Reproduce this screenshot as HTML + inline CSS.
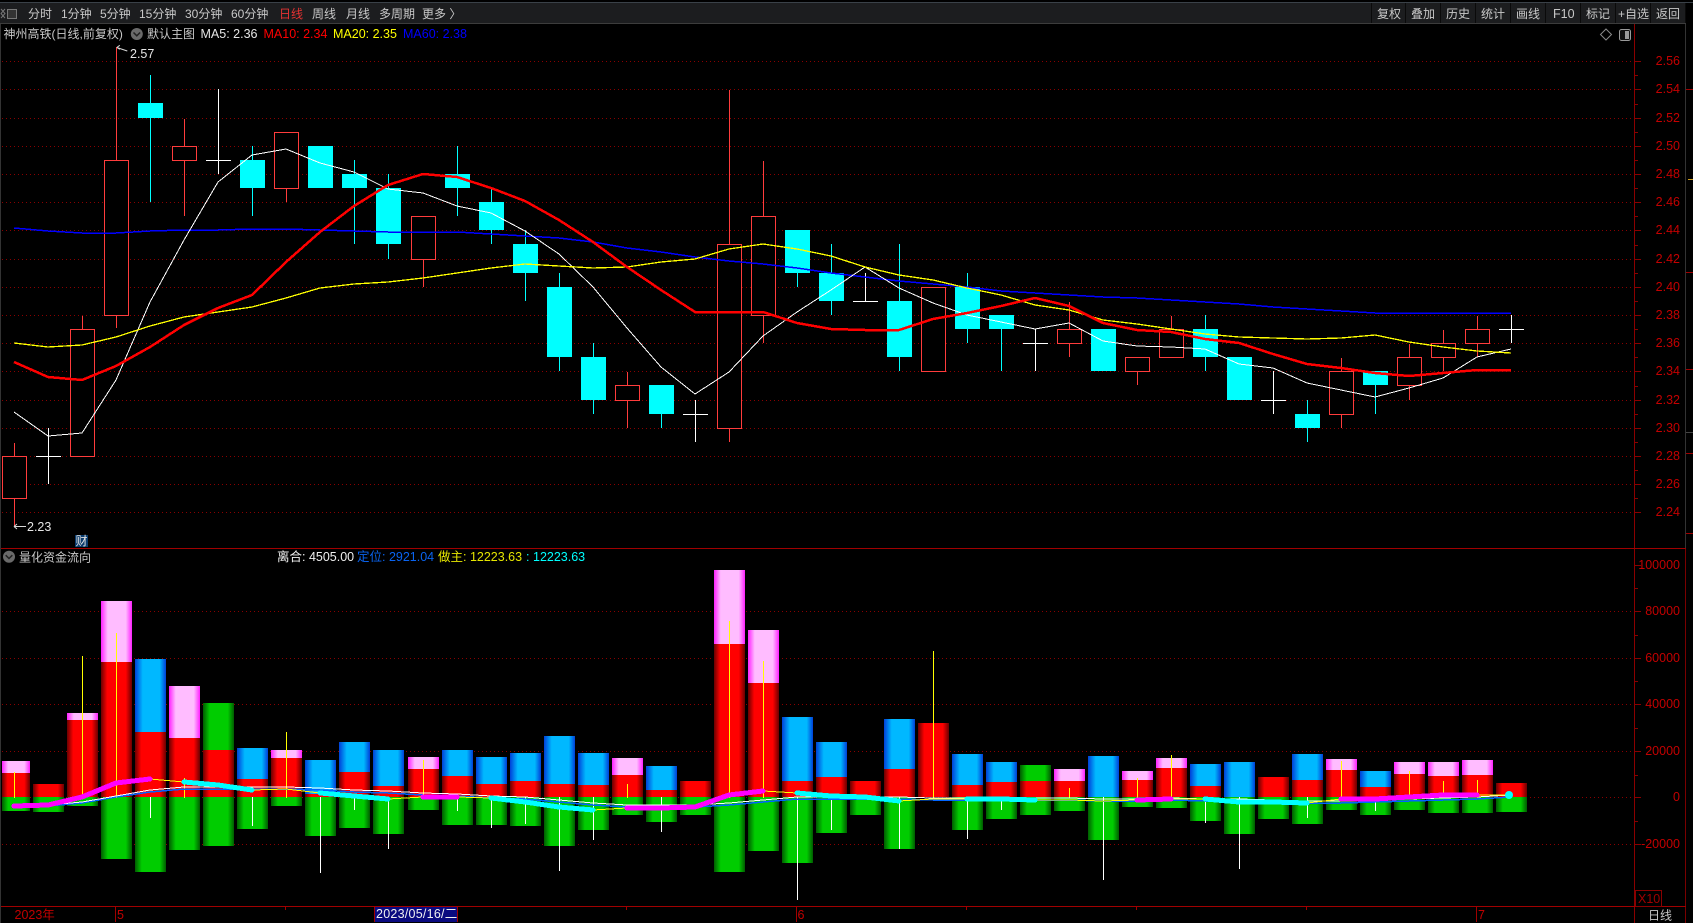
<!DOCTYPE html>
<html lang="zh">
<head>
<meta charset="utf-8">
<title>神州高铁</title>
<style>
html,body{margin:0;padding:0;background:#000;width:1693px;height:923px;overflow:hidden}
svg{display:block}
text{font-family:"Liberation Sans","Noto Sans CJK SC",sans-serif;font-size:12px;white-space:pre}
.t text{fill:#c8c8c8}
.ax text{fill:#c40000;font-size:12.5px;text-anchor:end}
.n{font-size:12.5px}
.c{shape-rendering:crispEdges}
.l{fill:none;shape-rendering:crispEdges}
</style>
</head>
<body>
<svg width="1693" height="923" viewBox="0 0 1693 923" xmlns="http://www.w3.org/2000/svg">
<defs>
<linearGradient id="r"><stop offset="0" stop-color="#6a0000"/><stop offset=".2" stop-color="#ff0000"/><stop offset=".8" stop-color="#ff0000"/><stop offset="1" stop-color="#6a0000"/></linearGradient>
<linearGradient id="p"><stop offset="0" stop-color="#ff20ff"/><stop offset=".22" stop-color="#ffbcff"/><stop offset=".8" stop-color="#ffbcff"/><stop offset="1" stop-color="#ff20ff"/></linearGradient>
<linearGradient id="b"><stop offset="0" stop-color="#0040d8"/><stop offset=".25" stop-color="#00b8ff"/><stop offset=".8" stop-color="#00b8ff"/><stop offset="1" stop-color="#0040d8"/></linearGradient>
<linearGradient id="g"><stop offset="0" stop-color="#005c00"/><stop offset=".22" stop-color="#00cc00"/><stop offset=".8" stop-color="#00cc00"/><stop offset="1" stop-color="#005c00"/></linearGradient>
</defs>
<rect width="1693" height="923" fill="#000"/>

<!-- toolbar -->
<g class="c">
<rect x="0" y="2" width="1693" height="1" fill="#3a4148"/>
<rect x="0" y="3" width="1686" height="20" fill="#1c1d1f"/>
<rect x="0" y="23" width="1686" height="1" fill="#3c3c3c"/>
<path d="M1371.5 3V23M1405.5 3V23M1440.5 3V23M1475.5 3V23M1510.5 3V23M1545.5 3V23M1580.5 3V23M1615.5 3V23M1650.5 3V23M1685.5 3V23" stroke="#0a0a0a" fill="none"/>
</g>
<path d="M1 9l4 4.500-4 4.500M5 9l-4 4.500 4 4.500" stroke="#777" fill="none"/>
<rect x="7.500" y="9.500" width="9" height="9" fill="#333" stroke="#777"/>
<g class="t">
<text x="28" y="18">分时</text>
<text x="61" y="18">1分钟</text>
<text x="100" y="18">5分钟</text>
<text x="139" y="18">15分钟</text>
<text x="185" y="18">30分钟</text>
<text x="231" y="18">60分钟</text>
<text x="279" y="18" style="fill:#e63232">日线</text>
<text x="312" y="18">周线</text>
<text x="346" y="18">月线</text>
<text x="379" y="18">多周期</text>
<text x="422" y="18">更多 〉</text>
<text x="1377" y="18">复权</text>
<text x="1411" y="18">叠加</text>
<text x="1446" y="18">历史</text>
<text x="1481" y="18">统计</text>
<text x="1516" y="18">画线</text>
<text x="1553" y="18" class="n">F10</text>
<text x="1586" y="18">标记</text>
<text x="1618" y="18">+自选</text>
<text x="1656" y="18">返回</text>
<text x="3.500" y="38">神州高铁(日线,前复权)</text>
<text x="147" y="38">默认主图</text>
<text x="19" y="561.500">量化资金流向</text>
<text x="1648" y="919.500">日线</text>
</g>
<circle cx="136.800" cy="34" r="6" fill="#6a6a6a"/>
<path d="M133.500 32.500l3.300 3.300 3.300-3.300" stroke="#222" stroke-width="1.500" fill="none"/>
<circle cx="9" cy="556.700" r="6" fill="#6a6a6a"/>
<path d="M5.700 555.200l3.300 3.300 3.300-3.300" stroke="#222" stroke-width="1.500" fill="none"/>
<text x="200.500" y="38" class="n" fill="#e6e6e6">MA5: 2.36</text>
<text x="263.500" y="38" class="n" fill="#ff0000">MA10: 2.34</text>
<text x="333" y="38" class="n" fill="#ffff00">MA20: 2.35</text>
<text x="403" y="38" class="n" fill="#0000ff">MA60: 2.38</text>
<path d="M1606 29l5.500 5.500-5.500 5.500-5.500-5.500z" stroke="#8a8a8a" fill="none"/>
<rect x="1619.500" y="29.500" width="11" height="11" rx="2" stroke="#9a9a9a" fill="#111"/>
<rect x="1625" y="31" width="4" height="8" fill="#9a9a9a"/>

<!-- frame -->
<g class="c" fill="none">
<path d="M.5 24V923" stroke="#333"/>
<path d="M1685.500 24V548" stroke="#333"/>
<path d="M1685.500 548V923" stroke="#7a0000"/>
<path d="M1686 89.500h7M1686 272.500h7M1686 369.500h7M1686 453.500h7M1686 533.500h7" stroke="#a00000"/>
<path d="M1688 179.500h5" stroke="#d0a020"/>
<path d="M1686 432.500h7" stroke="#444"/>
<path d="M1634.500 24V923" stroke="#8a0000"/>
<path d="M1 548.500H1686M1 906.500H1686" stroke="#a00000"/>
<path d="M1635 61.500h6M1635 89.500h6M1635 118.500h6M1635 146.500h6M1635 174.500h6M1635 202.500h6M1635 230.500h6M1635 259.500h6M1635 287.500h6M1635 315.500h6M1635 343.500h6M1635 371.500h6M1635 400.500h6M1635 428.500h6M1635 456.500h6M1635 484.500h6M1635 512.500h6M1635 75.500h3M1635 104.500h3M1635 132.500h3M1635 160.500h3M1635 188.500h3M1635 216.500h3M1635 245.500h3M1635 273.500h3M1635 301.500h3M1635 329.500h3M1635 357.500h3M1635 386.500h3M1635 414.500h3M1635 442.500h3M1635 470.500h3M1635 498.500h3" stroke="#8a0000"/>
<path d="M1635 565.500h6M1635 611.500h6M1635 658.500h6M1635 704.500h6M1635 751.500h6M1635 797.500h6M1635 844.500h6M1635 588.500h3M1635 635.500h3M1635 681.500h3M1635 728.500h3M1635 775.500h3M1635 821.500h3" stroke="#8a0000"/>
<!-- grids -->
<path d="M2 61.500H1634M2 89.500H1634M2 118.500H1634M2 146.500H1634M2 174.500H1634M2 202.500H1634M2 230.500H1634M2 259.500H1634M2 287.500H1634M2 315.500H1634M2 343.500H1634M2 371.500H1634M2 400.500H1634M2 428.500H1634M2 456.500H1634M2 484.500H1634M2 512.500H1634M2 611.500H1634M2 658.500H1634M2 704.500H1634M2 751.500H1634M2 797.500H1634M2 844.500H1634" stroke="#8a0000" stroke-dasharray="1 3"/>
</g>

<g class="ax">
<text x="1680" y="65">2.56</text><text x="1680" y="93">2.54</text><text x="1680" y="122">2.52</text><text x="1680" y="150">2.50</text><text x="1680" y="178">2.48</text><text x="1680" y="206">2.46</text><text x="1680" y="234">2.44</text><text x="1680" y="263">2.42</text><text x="1680" y="291">2.40</text><text x="1680" y="319">2.38</text><text x="1680" y="347">2.36</text><text x="1680" y="375">2.34</text><text x="1680" y="404">2.32</text><text x="1680" y="432">2.30</text><text x="1680" y="460">2.28</text><text x="1680" y="488">2.26</text><text x="1680" y="516">2.24</text>
<text x="1680" y="569">100000</text><text x="1680" y="615">80000</text><text x="1680" y="662">60000</text><text x="1680" y="708">40000</text><text x="1680" y="755">20000</text><text x="1680" y="801">0</text><text x="1680" y="848">-20000</text>
</g>

<!-- candles -->
<g class="c" fill="none">
<path stroke="#ff3c3c" d="M14.500 443V526M82.500 316V329M116.500 47V328M184.500 119V216M286.500 188V202M423.500 259V287M627.500 372V428M729.500 90V442M763.500 161V343M1069.500 302V357M1137.500 371V385M1171.500 316V329M1341.500 358V428M1409.500 344V400M1443.500 330V371M1477.500 316V357"/>
<g fill="#000" stroke="#ff3c3c">
<rect x="2.500" y="456.500" width="24" height="42"/>
<rect x="70.500" y="329.500" width="24" height="127"/>
<rect x="104.500" y="160.500" width="24" height="155"/>
<rect x="172.500" y="146.500" width="24" height="14"/>
<rect x="274.500" y="132.500" width="24" height="56"/>
<rect x="411.500" y="216.500" width="24" height="43"/>
<rect x="615.500" y="385.500" width="24" height="15"/>
<rect x="717.500" y="244.500" width="24" height="184"/>
<rect x="751.500" y="216.500" width="24" height="99"/>
<rect x="921.500" y="287.500" width="24" height="84"/>
<rect x="1057.500" y="329.500" width="24" height="14"/>
<rect x="1125.500" y="357.500" width="24" height="14"/>
<rect x="1159.500" y="329.500" width="24" height="28"/>
<rect x="1329.500" y="371.500" width="24" height="43"/>
<rect x="1397.500" y="357.500" width="24" height="28"/>
<rect x="1431.500" y="343.500" width="24" height="14"/>
<rect x="1465.500" y="329.500" width="24" height="14"/>
</g>
<path stroke="#00ffff" d="M150.500 75V202M252.500 146V216M354.500 160V244M388.500 174V259M457.500 146V216M491.500 188V244M525.500 230V301M559.500 273V371M593.500 343V414M661.500 385V428M797.500 230V287M831.500 244V315M899.500 244V371M967.500 273V343M1001.500 315V371M1205.500 315V371M1307.500 400V442M1375.500 371V414"/>
<path fill="#00ffff" d="M138 103h25v15h-25zM240 160h25v28h-25zM308 146h25v42h-25zM342 174h25v14h-25zM376 188h25v56h-25zM445 174h25v14h-25zM479 202h25v28h-25zM513 244h25v29h-25zM547 287h25v70h-25zM581 357h25v43h-25zM649 385h25v29h-25zM785 230h25v43h-25zM819 273h25v28h-25zM887 301h25v56h-25zM955 287h25v42h-25zM989 315h25v14h-25zM1091 329h25v42h-25zM1193 329h25v28h-25zM1227 357h25v43h-25zM1295 414h25v14h-25zM1363 371h25v14h-25z"/>
<path stroke="#fff" d="M36 456.500h25M48.500 428V484M206 160.500h25M218.500 89V174M683 414.500h25M695.500 400V442M853 301.500h25M865.500 273V301M1023 343.500h25M1035.500 329V371M1261 400.500h25M1273.500 371V414M1499 329.500h25M1511.500 315V343"/>
</g>

<!-- MA lines -->
<polyline class="l" stroke="#0000ff" stroke-width="1.500" points="14,228 48,231 82,233 116,233 150,231 184,230 218,230 252,229 286,229 320,230 354,231 388,232 423,232 457,232 491,234 525,236 559,238 593,242 627,248 661,252 695,257 729,261 763,264 797,268 831,273 865,277 899,281 933,284 967,287 1001,291 1035,293 1069,295 1103,297 1137,298 1171,300 1205,302 1239,304 1273,307 1307,309 1341,311 1375,313 1409,313 1443,313 1477,313 1511,313"/>
<polyline class="l" stroke="#fff" points="14,412 48,436 82,433 116,380 150,302 184,240 218,182 252,155 286,149 320,163 354,172 388,189 423,193 457,206 491,213 525,231 559,254 593,287 627,328 661,367 695,394 729,372 763,336 797,312 831,290 865,267 899,288 933,303 967,315 1001,322 1035,329 1069,323 1103,341 1137,346 1171,347 1205,349 1239,364 1273,368 1307,383 1341,390 1375,397 1409,388 1443,378 1477,357 1511,349"/>
<polyline class="l" stroke="#ffff00" stroke-width="1.300" points="14,343 48,347 82,345 116,337 150,326 184,317 218,312 252,307 286,298 320,288 354,284 388,282 423,278 457,273 491,268 525,264 559,266 593,268 627,267 661,262 695,259 729,249 763,244 797,249 831,256 865,267 899,275 933,280 967,288 1001,295 1035,305 1069,310 1103,320 1137,324 1171,329 1205,334 1239,337 1273,338 1307,339 1341,338 1375,335 1409,342 1443,347 1477,351 1511,353"/>
<polyline class="l" stroke="#ff0000" stroke-width="2.500" points="14,362 48,377 82,380 116,366 150,347 184,325 218,308 252,295 286,262 320,232 354,206 388,185 423,174 457,177 491,188 525,201 559,220 593,242 627,267 661,290 695,312 729,312 763,312 797,323 831,329 865,330 899,330 933,319 967,313 1001,306 1035,298 1069,306 1103,323 1137,330 1171,332 1205,339 1239,343 1273,354 1307,364 1341,368 1375,373 1409,376 1443,373 1477,370 1511,370"/>

<!-- price marks -->
<path d="M116.800 47.500l10.500 3.500M116.800 47.500l3-2.200M116.800 47.500l3 1.800" stroke="#d8d8d8" fill="none"/>
<text x="130" y="58" class="n" fill="#e6e6e6">2.57</text>
<path d="M14 526.500h12M14 526.500l3-2.500M14 526.500l3 2.500" stroke="#d8d8d8" fill="none"/>
<text x="27" y="531" class="n" fill="#e6e6e6">2.23</text>
<rect x="75" y="535" width="13" height="12" fill="#0a3c6e" class="c"/>
<text x="75.500" y="545" fill="#e0e0e0">财</text>

<!-- lower header -->
<text x="277" y="561" class="n" fill="#f0f0f0">离合: 4505.00</text>
<text x="357" y="561" class="n" fill="#0a64f0">定位: 2921.04</text>
<text x="438" y="561" class="n" fill="#e6e600">做主: 12223.63</text>
<text x="526" y="561" class="n" fill="#00ffff">:</text>
<text x="533" y="561" class="n" fill="#00ffff">12223.63</text>

<!-- bars -->
<g class="c">
<rect x="2" y="761" width="28" height="12" fill="url(#p)"/><rect x="2" y="773" width="28" height="24" fill="url(#r)"/><rect x="2" y="797" width="28" height="14" fill="url(#g)"/>
<rect x="33" y="784" width="31" height="13" fill="url(#r)"/><rect x="33" y="797" width="31" height="15" fill="url(#g)"/>
<rect x="67" y="713" width="31" height="7" fill="url(#p)"/><rect x="67" y="720" width="31" height="77" fill="url(#r)"/><rect x="67" y="797" width="31" height="9" fill="url(#g)"/>
<rect x="101" y="601" width="31" height="61" fill="url(#p)"/><rect x="101" y="662" width="31" height="135" fill="url(#r)"/><rect x="101" y="797" width="31" height="62" fill="url(#g)"/>
<rect x="135" y="659" width="31" height="73" fill="url(#b)"/><rect x="135" y="732" width="31" height="65" fill="url(#r)"/><rect x="135" y="797" width="31" height="75" fill="url(#g)"/>
<rect x="169" y="686" width="31" height="52" fill="url(#p)"/><rect x="169" y="738" width="31" height="59" fill="url(#r)"/><rect x="169" y="797" width="31" height="53" fill="url(#g)"/>
<rect x="203" y="703" width="31" height="47" fill="url(#g)"/><rect x="203" y="750" width="31" height="47" fill="url(#r)"/><rect x="203" y="797" width="31" height="49" fill="url(#g)"/>
<rect x="237" y="748" width="31" height="31" fill="url(#b)"/><rect x="237" y="779" width="31" height="18" fill="url(#r)"/><rect x="237" y="797" width="31" height="32" fill="url(#g)"/>
<rect x="271" y="750" width="31" height="8" fill="url(#p)"/><rect x="271" y="758" width="31" height="39" fill="url(#r)"/><rect x="271" y="797" width="31" height="9" fill="url(#g)"/>
<rect x="305" y="760" width="31" height="34" fill="url(#b)"/><rect x="305" y="794" width="31" height="3" fill="url(#r)"/><rect x="305" y="797" width="31" height="39" fill="url(#g)"/>
<rect x="339" y="742" width="31" height="30" fill="url(#b)"/><rect x="339" y="772" width="31" height="25" fill="url(#r)"/><rect x="339" y="797" width="31" height="31" fill="url(#g)"/>
<rect x="373" y="750" width="31" height="36" fill="url(#b)"/><rect x="373" y="786" width="31" height="11" fill="url(#r)"/><rect x="373" y="797" width="31" height="37" fill="url(#g)"/>
<rect x="408" y="757" width="31" height="12" fill="url(#p)"/><rect x="408" y="769" width="31" height="28" fill="url(#r)"/><rect x="408" y="797" width="31" height="13" fill="url(#g)"/>
<rect x="442" y="750" width="31" height="26" fill="url(#b)"/><rect x="442" y="776" width="31" height="21" fill="url(#r)"/><rect x="442" y="797" width="31" height="28" fill="url(#g)"/>
<rect x="476" y="757" width="31" height="27" fill="url(#b)"/><rect x="476" y="784" width="31" height="13" fill="url(#r)"/><rect x="476" y="797" width="31" height="28" fill="url(#g)"/>
<rect x="510" y="753" width="31" height="28" fill="url(#b)"/><rect x="510" y="781" width="31" height="16" fill="url(#r)"/><rect x="510" y="797" width="31" height="29" fill="url(#g)"/>
<rect x="544" y="736" width="31" height="48" fill="url(#b)"/><rect x="544" y="784" width="31" height="13" fill="url(#r)"/><rect x="544" y="797" width="31" height="49" fill="url(#g)"/>
<rect x="578" y="753" width="31" height="32" fill="url(#b)"/><rect x="578" y="785" width="31" height="12" fill="url(#r)"/><rect x="578" y="797" width="31" height="33" fill="url(#g)"/>
<rect x="612" y="758" width="31" height="17" fill="url(#p)"/><rect x="612" y="775" width="31" height="22" fill="url(#r)"/><rect x="612" y="797" width="31" height="18" fill="url(#g)"/>
<rect x="646" y="766" width="31" height="24" fill="url(#b)"/><rect x="646" y="790" width="31" height="7" fill="url(#r)"/><rect x="646" y="797" width="31" height="25" fill="url(#g)"/>
<rect x="680" y="781" width="31" height="16" fill="url(#r)"/><rect x="680" y="797" width="31" height="18" fill="url(#g)"/>
<rect x="714" y="570" width="31" height="74" fill="url(#p)"/><rect x="714" y="644" width="31" height="153" fill="url(#r)"/><rect x="714" y="797" width="31" height="75" fill="url(#g)"/>
<rect x="748" y="630" width="31" height="53" fill="url(#p)"/><rect x="748" y="683" width="31" height="114" fill="url(#r)"/><rect x="748" y="797" width="31" height="54" fill="url(#g)"/>
<rect x="782" y="717" width="31" height="64" fill="url(#b)"/><rect x="782" y="781" width="31" height="16" fill="url(#r)"/><rect x="782" y="797" width="31" height="66" fill="url(#g)"/>
<rect x="816" y="742" width="31" height="35" fill="url(#b)"/><rect x="816" y="777" width="31" height="20" fill="url(#r)"/><rect x="816" y="797" width="31" height="36" fill="url(#g)"/>
<rect x="850" y="781" width="31" height="16" fill="url(#r)"/><rect x="850" y="797" width="31" height="18" fill="url(#g)"/>
<rect x="884" y="719" width="31" height="50" fill="url(#b)"/><rect x="884" y="769" width="31" height="28" fill="url(#r)"/><rect x="884" y="797" width="31" height="52" fill="url(#g)"/>
<rect x="918" y="723" width="31" height="74" fill="url(#r)"/>
<rect x="952" y="754" width="31" height="31" fill="url(#b)"/><rect x="952" y="785" width="31" height="12" fill="url(#r)"/><rect x="952" y="797" width="31" height="33" fill="url(#g)"/>
<rect x="986" y="762" width="31" height="20" fill="url(#b)"/><rect x="986" y="782" width="31" height="15" fill="url(#r)"/><rect x="986" y="797" width="31" height="22" fill="url(#g)"/>
<rect x="1020" y="765" width="31" height="16" fill="url(#g)"/><rect x="1020" y="781" width="31" height="16" fill="url(#r)"/><rect x="1020" y="797" width="31" height="18" fill="url(#g)"/>
<rect x="1054" y="769" width="31" height="12" fill="url(#p)"/><rect x="1054" y="781" width="31" height="16" fill="url(#r)"/><rect x="1054" y="797" width="31" height="14" fill="url(#g)"/>
<rect x="1088" y="756" width="31" height="41" fill="url(#b)"/><rect x="1088" y="797" width="31" height="43" fill="url(#g)"/>
<rect x="1122" y="771" width="31" height="9" fill="url(#p)"/><rect x="1122" y="780" width="31" height="17" fill="url(#r)"/><rect x="1122" y="797" width="31" height="10" fill="url(#g)"/>
<rect x="1156" y="758" width="31" height="10" fill="url(#p)"/><rect x="1156" y="768" width="31" height="29" fill="url(#r)"/><rect x="1156" y="797" width="31" height="11" fill="url(#g)"/>
<rect x="1190" y="764" width="31" height="22" fill="url(#b)"/><rect x="1190" y="786" width="31" height="11" fill="url(#r)"/><rect x="1190" y="797" width="31" height="24" fill="url(#g)"/>
<rect x="1224" y="762" width="31" height="35" fill="url(#b)"/><rect x="1224" y="797" width="31" height="37" fill="url(#g)"/>
<rect x="1258" y="777" width="31" height="20" fill="url(#r)"/><rect x="1258" y="797" width="31" height="22" fill="url(#g)"/>
<rect x="1292" y="754" width="31" height="26" fill="url(#b)"/><rect x="1292" y="780" width="31" height="17" fill="url(#r)"/><rect x="1292" y="797" width="31" height="27" fill="url(#g)"/>
<rect x="1326" y="759" width="31" height="11" fill="url(#p)"/><rect x="1326" y="770" width="31" height="27" fill="url(#r)"/><rect x="1326" y="797" width="31" height="13" fill="url(#g)"/>
<rect x="1360" y="771" width="31" height="16" fill="url(#b)"/><rect x="1360" y="787" width="31" height="10" fill="url(#r)"/><rect x="1360" y="797" width="31" height="18" fill="url(#g)"/>
<rect x="1394" y="762" width="31" height="12" fill="url(#p)"/><rect x="1394" y="774" width="31" height="23" fill="url(#r)"/><rect x="1394" y="797" width="31" height="13" fill="url(#g)"/>
<rect x="1428" y="762" width="31" height="14" fill="url(#p)"/><rect x="1428" y="776" width="31" height="21" fill="url(#r)"/><rect x="1428" y="797" width="31" height="16" fill="url(#g)"/>
<rect x="1462" y="760" width="31" height="15" fill="url(#p)"/><rect x="1462" y="775" width="31" height="22" fill="url(#r)"/><rect x="1462" y="797" width="31" height="16" fill="url(#g)"/>
<rect x="1496" y="783" width="31" height="14" fill="url(#r)"/><rect x="1496" y="797" width="31" height="15" fill="url(#g)"/>
</g>

<!-- lower wicks -->
<g class="c" fill="none">
<path stroke="#ffff00" d="M14.500 772V798M82.500 656V798M116.500 633V798M184.500 778V798M286.500 732V798M423.500 760V798M627.500 784V798M729.500 621V798M763.500 661V798M933.500 651V798M1069.500 788V798M1137.500 778V798M1171.500 755V798M1341.500 761V798M1409.500 771V798M1443.500 781V798M1477.500 780V798"/>
<path stroke="#fff" d="M150.500 797V818M252.500 797V826M320.500 797V873M354.500 797V810M388.500 797V849M457.500 797V811M491.500 797V828M525.500 797V824M559.500 797V871M593.500 797V840M661.500 797V832M797.500 797V900M831.500 797V830M899.500 797V849M967.500 797V839M1001.500 797V810M1103.500 797V880M1205.500 797V823M1239.500 797V869M1307.500 797V818M1375.500 797V811"/>
</g>

<!-- lower lines -->
<polyline class="l" stroke="#0064ff" stroke-width="1.500" points="48,806 82,803 116,797 150,792 184,789 218,789 252,789 286,789 320,790 354,792 388,793 423,795 457,796 491,798 525,799 559,802 593,805 627,807 661,807 695,807 729,805 763,802 797,799 831,799 865,799 899,799 933,800 967,800 1001,800 1035,800 1069,800 1103,801 1137,801 1171,800 1205,801 1239,801 1273,802 1307,803 1341,803 1375,802 1409,801 1443,800 1477,799 1511,797"/>
<polyline class="l" stroke="#fff" points="48,805 82,802 116,796 150,790 184,787 218,787 252,787 286,787 320,788 354,790 388,791 423,793 457,794 491,796 525,797 559,800 593,803 627,805 661,805 695,805 729,803 763,800 797,797 831,797 865,797 899,797 933,798 967,798 1001,798 1035,798 1069,798 1103,799 1137,799 1171,798 1205,799 1239,799 1273,800 1307,801 1341,801 1375,800 1409,799 1443,798 1477,797 1511,795"/>
<polyline class="l" stroke="#ffff00" points="14,806 48,805 82,797 116,783 150,779 184,782 218,785 252,790 286,789 320,793 354,796 388,799 423,797 457,797 491,798 525,802 559,807 593,810 627,808 661,808 695,807 729,795 763,791 797,793 831,796 865,797 899,801 933,799 967,799 1001,799 1035,800 1069,800 1103,801 1137,800 1171,799 1205,799 1239,802 1273,802 1307,803 1341,799 1375,799 1409,797 1443,795 1477,795 1511,795"/>
<g class="l" stroke-width="5" stroke-linecap="round">
<polyline stroke="#ff00ff" points="14,806 48,805 82,797 116,783 150,779"/>
<polyline stroke="#00ffff" points="184,782 218,785 252,790"/>
<polyline stroke="#00ffff" points="320,793 354,796 388,799"/>
<polyline stroke="#ff00ff" points="423,797 457,797"/>
<polyline stroke="#00ffff" points="491,798 525,802 559,807 593,810"/>
<polyline stroke="#ff00ff" points="627,808 661,808 695,807 729,795 763,791"/>
<polyline stroke="#00ffff" points="797,793 831,796 865,797 899,801"/>
<polyline stroke="#00ffff" points="967,799 1001,799 1035,800"/>
<polyline stroke="#ff00ff" points="1137,800 1171,799"/>
<polyline stroke="#00ffff" points="1205,799 1239,802 1273,802 1307,803"/>
<polyline stroke="#ff00ff" points="1341,799 1375,799 1409,797 1443,795 1477,795"/>
</g>
<circle cx="1509" cy="795" r="4" fill="#00ffff"/>

<!-- time axis -->
<g class="c" fill="none" stroke="#a00000">
<path d="M115.500 907V922M796.500 907V922M1476.500 907V922M285.500 907V910M626.500 907V910M966.500 907V910M1136.500 907V910M1306.500 907V910"/>
<rect x="1635.500" y="890.500" width="26" height="16" stroke="#8a0000"/>
</g>
<text x="14.500" y="919" class="n" fill="#c00000">2023年</text>
<text x="117" y="919" class="n" fill="#c00000">5</text>
<text x="797.500" y="919" class="n" fill="#c00000">6</text>
<text x="1478" y="919" class="n" fill="#c00000">7</text>
<rect x="374" y="907" width="84" height="15" fill="#0a0a80" class="c"/>
<path d="M374.500 907V922M457.500 907V922" stroke="#a00000" class="c"/>
<text x="376" y="918" class="n" fill="#f0f0f0" style="letter-spacing:.25px">2023/05/16/二</text>
<text x="1638" y="903" class="n" fill="#a00000">X10</text>
</svg>
</body>
</html>
